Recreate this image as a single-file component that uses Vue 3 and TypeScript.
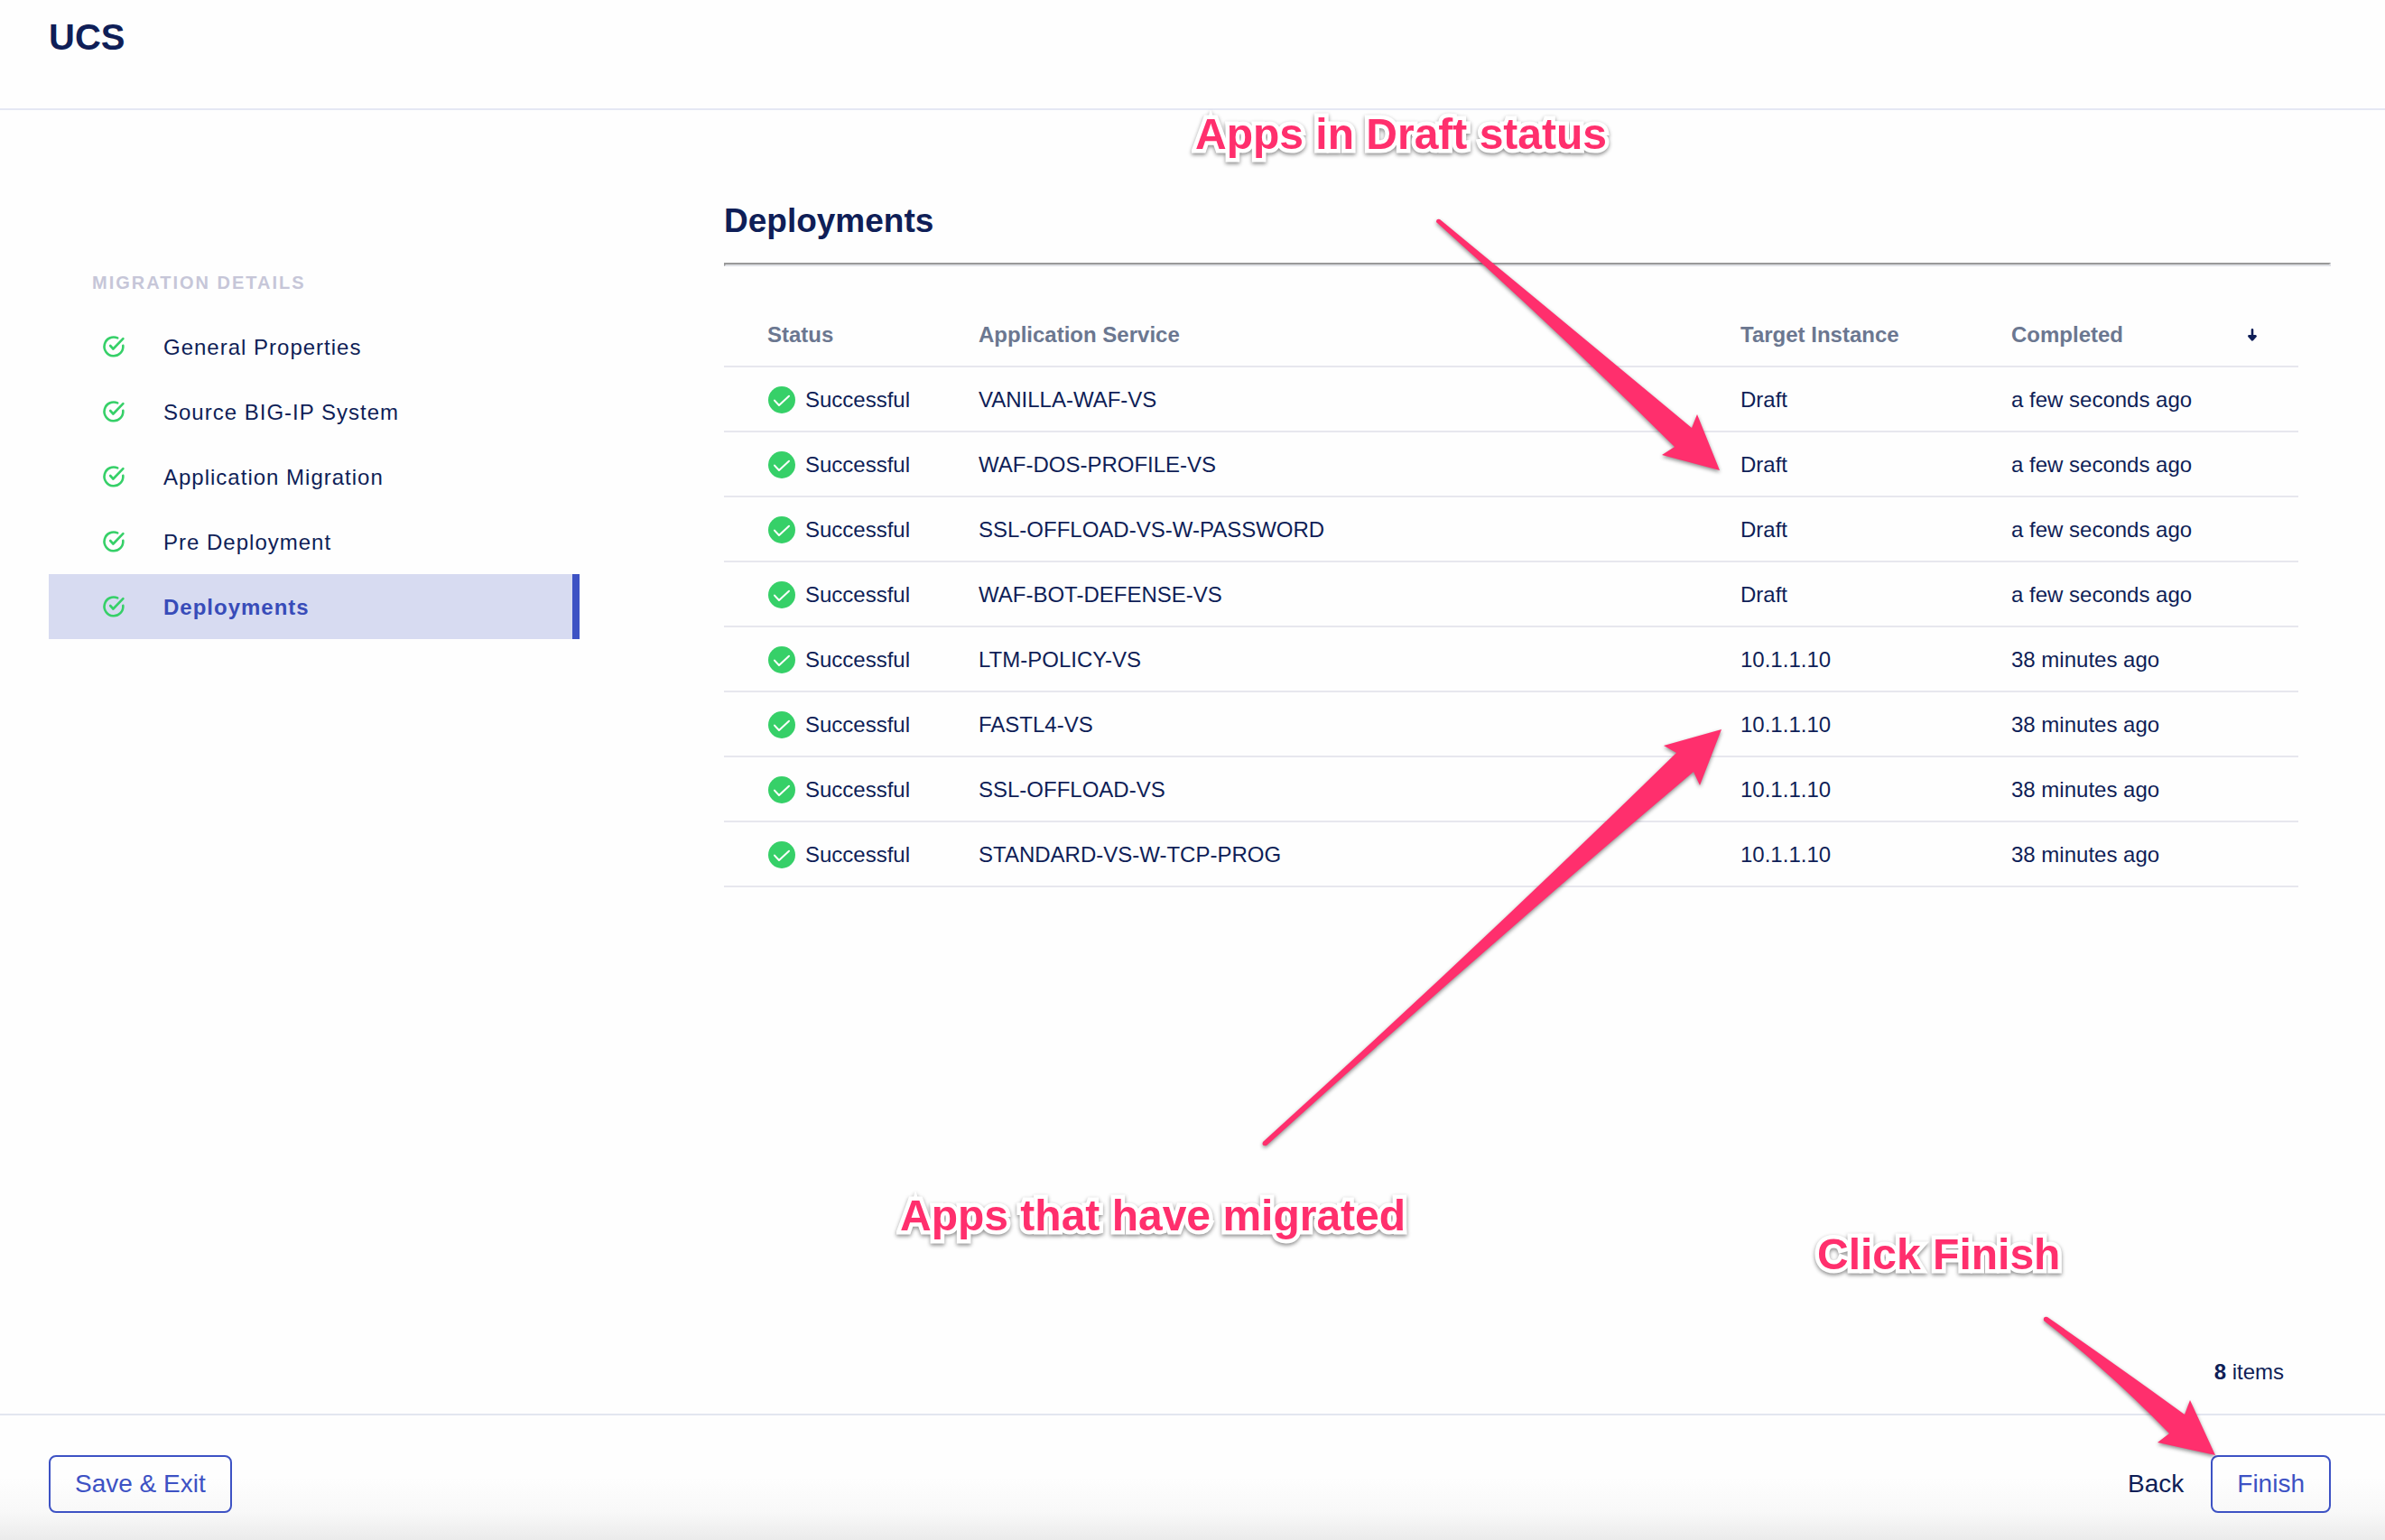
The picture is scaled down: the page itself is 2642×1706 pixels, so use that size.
<script setup lang="ts">
interface Step {
  label: string
  active?: boolean
}

interface Deployment {
  service: string
  target: string
  completed: string
}

const steps: Step[] = [
  { label: 'General Properties' },
  { label: 'Source BIG-IP System' },
  { label: 'Application Migration' },
  { label: 'Pre Deployment' },
  { label: 'Deployments', active: true },
]

const deployments: Deployment[] = [
  { service: 'VANILLA-WAF-VS', target: 'Draft', completed: 'a few seconds ago' },
  { service: 'WAF-DOS-PROFILE-VS', target: 'Draft', completed: 'a few seconds ago' },
  { service: 'SSL-OFFLOAD-VS-W-PASSWORD', target: 'Draft', completed: 'a few seconds ago' },
  { service: 'WAF-BOT-DEFENSE-VS', target: 'Draft', completed: 'a few seconds ago' },
  { service: 'LTM-POLICY-VS', target: '10.1.1.10', completed: '38 minutes ago' },
  { service: 'FASTL4-VS', target: '10.1.1.10', completed: '38 minutes ago' },
  { service: 'SSL-OFFLOAD-VS', target: '10.1.1.10', completed: '38 minutes ago' },
  { service: 'STANDARD-VS-W-TCP-PROG', target: '10.1.1.10', completed: '38 minutes ago' },
]
</script>

<template>
  <div class="page">
    <header class="header">
      <h1>UCS</h1>
    </header>

    <div class="body">
      <nav class="sidebar" aria-label="Migration details">
        <h2 class="sidebar-title">MIGRATION DETAILS</h2>
        <ul>
          <li v-for="step in steps" :key="step.label">
            <a href="#" class="step" :class="{ active: step.active }">
              <svg class="step-icon" viewBox="0 0 24 24" aria-hidden="true">
                <path d="M16.2 2.4A10.4 10.4 0 1 0 22.3 10.9" />
                <path d="M8.2 11l3.2 3.5L22.4 3.2" />
              </svg>
              <span>{{ step.label }}</span>
            </a>
          </li>
        </ul>
      </nav>

      <main class="content">
        <h2 class="content-title">Deployments</h2>
        <hr />
        <div class="table-area">
          <table>
            <colgroup>
              <col class="col-status" />
              <col />
              <col class="col-target" />
              <col class="col-completed" />
            </colgroup>
            <thead>
              <tr>
                <th scope="col">Status</th>
                <th scope="col">Application Service</th>
                <th scope="col">Target Instance</th>
                <th scope="col">
                  <div class="sortable">
                    <span>Completed</span>
                    <button type="button" class="sort" aria-label="Sort by completed">
                      <svg viewBox="0 0 10 14" aria-hidden="true">
                        <path d="M5 1.2V12M1.4 8.4L5 12.4l3.6-4z" />
                      </svg>
                    </button>
                  </div>
                </th>
              </tr>
            </thead>
            <tbody>
              <tr v-for="item in deployments" :key="item.service">
                <td>
                  <div class="status">
                    <svg class="status-icon" viewBox="0 0 30 30" aria-hidden="true">
                      <circle cx="15" cy="15" r="15" />
                      <path d="M7 15.6l5 5.4L23 10.8" />
                    </svg>
                    <span>Successful</span>
                  </div>
                </td>
                <td>{{ item.service }}</td>
                <td>{{ item.target }}</td>
                <td>{{ item.completed }}</td>
              </tr>
            </tbody>
          </table>
          <p class="count"><strong>{{ deployments.length }}</strong> items</p>
        </div>
      </main>
    </div>

    <footer class="footer">
      <button type="button" class="btn outlined">Save &amp; Exit</button>
      <div class="footer-right">
        <button type="button" class="btn plain">Back</button>
        <button type="button" class="btn outlined">Finish</button>
      </div>
    </footer>

    <!-- Callouts drawn over the page -->
    <svg class="arrows" aria-hidden="true">
      <path d="M1595 243Q1737 360 1874 474L1880 459L1905 521L1841 504L1855 495Q1723 364 1591 246Q1591 242 1595 243Z" />
      <path d="M1399 1265Q1632 1054 1857 834L1843 826L1907 808L1883 870L1876 855Q1636 1058 1403 1269Q1397 1270 1399 1265Z" />
      <path d="M2268 1459Q2343 1511 2420 1567L2426 1551L2454 1612L2390 1598L2403 1588Q2336 1519 2264 1463Q2263 1458 2268 1459Z" />
    </svg>
    <p class="note note-draft">Apps in Draft status</p>
    <p class="note note-migrated">Apps that have migrated</p>
    <p class="note note-finish">Click Finish</p>
  </div>
</template>

<style>
body {
  margin: 0;
  background: #fefefe;
}
</style>

<style scoped>
.page {
  position: relative;
  display: flex;
  flex-direction: column;
  min-height: 100vh;
  box-sizing: border-box;
  overflow: hidden;
  background: #fefefe;
  color: #0f1e57;
  font-family: "Liberation Sans", Arial, Helvetica, sans-serif;
  font-size: 24px;
  line-height: 32px;
}

h1,
h2,
p,
ul {
  margin: 0;
  padding: 0;
}

.header {
  padding: 17px 54px 55px;
  border-bottom: 2px solid #e5e8f4;
}

.header h1 {
  font-size: 40px;
  line-height: 48px;
}

.body {
  display: flex;
  flex: 1;
  gap: 160px;
  padding: 0 60px 0 54px;
}

.sidebar {
  flex: 0 0 588px;
  padding-top: 179px;
}

.sidebar-title {
  margin-bottom: 23px;
  padding-left: 48px;
  color: #c6c6d8;
  font-size: 20px;
  line-height: 24px;
  letter-spacing: 2px;
}

.sidebar ul {
  list-style: none;
}

.step {
  display: flex;
  align-items: center;
  gap: 43px;
  height: 72px;
  box-sizing: border-box;
  padding-left: 60px;
  color: inherit;
  letter-spacing: 1px;
  text-decoration: none;
}

.step span {
  padding-top: 2px;
}

.step.active {
  border-right: 8px solid #3d52c4;
  background: #d7dbf1;
  color: #384cb9;
  font-weight: 700;
}

.step-icon {
  width: 24px;
  height: 24px;
  overflow: visible;
  fill: none;
  stroke: #36d068;
  stroke-width: 2.6;
  stroke-linecap: round;
  stroke-linejoin: round;
}

.content {
  display: flex;
  flex: 1;
  flex-direction: column;
  min-width: 0;
  padding: 101px 0 30px;
}

.content-title {
  margin-bottom: 24px;
  font-size: 37px;
  line-height: 44px;
}

hr {
  width: 100%;
  box-sizing: border-box;
  margin: 0;
  border: 2px solid;
  border-color: #999 #e0e1e6 #e0e1e6 #999;
}

.table-area {
  display: flex;
  flex: 1;
  flex-direction: column;
  justify-content: space-between;
  gap: 32px;
  padding: 40px 36px 0 0;
}

table {
  width: 100%;
  border-spacing: 0;
  table-layout: fixed;
}

.col-status {
  width: 234px;
}

.col-target {
  width: 300px;
}

.col-completed {
  width: 366px;
}

th,
td {
  height: 72px;
  box-sizing: border-box;
  padding: 2px 0 0 48px;
  border-bottom: 2px solid #e7e7ee;
  text-align: left;
  vertical-align: middle;
}

th {
  color: #6b7790;
}

.sortable {
  display: flex;
  align-items: center;
  justify-content: space-between;
  padding-right: 46px;
}

.sort {
  display: flex;
  padding: 0;
  border: 0;
  background: none;
}

.sort svg {
  width: 10px;
  height: 14px;
  overflow: visible;
  fill: #0f1e57;
  stroke: #0f1e57;
  stroke-width: 2.6;
  stroke-linecap: round;
  stroke-linejoin: round;
}

.status {
  display: flex;
  align-items: center;
  gap: 11px;
}

.status-icon {
  width: 30px;
  height: 30px;
  margin-left: 1px;
}

.status-icon circle {
  fill: #36d068;
}

.status-icon path {
  fill: none;
  stroke: #fff;
  stroke-width: 2;
  stroke-linecap: round;
  stroke-linejoin: round;
}

.count {
  padding-right: 16px;
  text-align: right;
}

.footer {
  display: flex;
  justify-content: space-between;
  padding: 44px 60px 30px 54px;
  border-top: 2px solid #e3e6f0;
  background: linear-gradient(#fefefe 50%, #f8f8f8 78%, #ebebeb);
}

.footer-right {
  display: flex;
  gap: 30px;
}

.btn {
  height: 64px;
  box-sizing: border-box;
  border: 0;
  background: none;
  font: inherit;
  font-size: 28px;
}

.outlined {
  padding: 0 27px;
  border: 2px solid #3d52c4;
  border-radius: 8px;
  color: #3d52c4;
}

.plain {
  padding: 0;
  color: #0f1e57;
}

.arrows {
  position: absolute;
  top: 0;
  left: 0;
  width: 100%;
  height: 100%;
  fill: #ff2f6d;
  filter: drop-shadow(0 2px 2px rgba(0, 0, 0, 0.45));
  pointer-events: none;
}

.note {
  position: absolute;
  color: #ff2f6d;
  font-size: 48px;
  font-weight: 700;
  line-height: 56px;
  white-space: nowrap;
  -webkit-text-stroke: 9px #fff;
  paint-order: stroke fill;
  stroke-linejoin: round;
  filter: drop-shadow(0 2px 2px rgba(0, 0, 0, 0.45));
}

.note-draft {
  top: 121px;
  left: 1324px;
}

.note-migrated {
  top: 1319px;
  left: 997px;
}

.note-finish {
  top: 1362px;
  left: 2013px;
}
</style>
